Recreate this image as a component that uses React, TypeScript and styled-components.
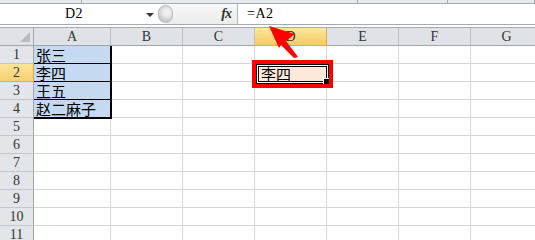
import styled, { createGlobalStyle } from "styled-components";

const GlobalStyle = createGlobalStyle`
  html, body {
    margin: 0;
    padding: 0;
    background: #fff;
  }
  body {
    font-family: "Liberation Serif", "Noto Sans CJK SC", serif;
  }
`;

const COLS = ["A", "B", "C", "D", "E", "F", "G"];
const ROWS = 11;
const names = ["张三", "李四", "王五", "赵二麻子"];

export default function App() {
  return (
    <Window>
      <GlobalStyle />
      <TopStrip>
        <StripPart $w={82} />
        <StripPart $w={276} />
        <StripPart $w={90} />
        <StripPart />
      </TopStrip>
      <FormulaBar>
        <NameBox>
          <NameText>D2</NameText>
          <DropArrow />
        </NameBox>
        <Splitter>
          <Knob />
          <Fx>
            <i>f</i>x
          </Fx>
        </Splitter>
        <FormulaInput>=A2</FormulaInput>
      </FormulaBar>
      <BarGap />
      <Sheet>
        <Corner>
          <CornerMark />
        </Corner>
        {COLS.map((c) => (
          <ColHead key={c} $active={c === "D"}>
            {c}
          </ColHead>
        ))}
        {Array.from({ length: ROWS }, (_, i) => {
          const r = i + 1;
          return [
            <RowHead key={`h${r}`} $active={r === 2}>
              {r}
            </RowHead>,
            ...COLS.map((c) => {
              if (c === "A" && r <= 4) {
                return (
                  <NameCell key={`${c}${r}`} $last={r === 4}>
                    {names[r - 1]}
                  </NameCell>
                );
              }
              if (c === "D" && r === 2) {
                return (
                  <Cell key={`${c}${r}`}>
                    <Highlight>
                      <Selected>
                        李四
                        <FillHandle />
                      </Selected>
                    </Highlight>
                  </Cell>
                );
              }
              return <Cell key={`${c}${r}`} />;
            }),
          ];
        })}
      </Sheet>
      <Arrow viewBox="260 20 45 45" width="45" height="45">
        <polygon
          points="269,26 295,34 286,41 298,57 294,58 281,45 279,48"
          fill="#f00"
        />
      </Arrow>
    </Window>
  );
}

const Window = styled.div`
  position: relative;
  width: 535px;
  height: 240px;
  overflow: hidden;
  background: #fff;
`;

const TopStrip = styled.div`
  display: flex;
  height: 3px;
  background: #e6e9ed;
  border-bottom: 1px solid #a3aab3;
`;

const StripPart = styled.div<{ $w?: number }>`
  flex: ${(p) => (p.$w ? `0 0 ${p.$w}px` : "1")};
  border-right: 1px solid #a3aab3;
  box-sizing: border-box;
`;

const FormulaBar = styled.div`
  display: flex;
  height: 20px;
  border-bottom: 1px solid #a3aab3;
  background: #fff;
`;

const NameBox = styled.div`
  display: flex;
  align-items: center;
  width: 158px;
  box-sizing: border-box;
  padding-right: 4px;
`;

const NameText = styled.span`
  flex: 1;
  text-align: center;
  font-size: 14px;
  color: #000;
  padding-left: 2px;
  letter-spacing: 0.5px;
`;

const DropArrow = styled.span`
  width: 0;
  height: 0;
  border-left: 4px solid transparent;
  border-right: 4px solid transparent;
  border-top: 4px solid #333;
  margin-top: 1px;
`;

const Splitter = styled.div`
  display: flex;
  align-items: center;
  justify-content: space-between;
  width: 80px;
  box-sizing: border-box;
  padding-right: 6px;
  background: linear-gradient(#f8f8f8, #ececec);
  border-right: 1px solid #b0b6bd;
  border-radius: 10px 0 0 10px;
`;

const Knob = styled.span`
  width: 15px;
  height: 18px;
  border-radius: 9px;
  background: radial-gradient(circle at 60% 40%, #f0f0f0 20%, #c4c7cb 75%);
  border: 1px solid #b5b9be;
  box-sizing: border-box;
`;

const Fx = styled.span`
  font-family: "Liberation Serif", serif;
  font-style: italic;
  font-weight: bold;
  font-size: 14px;
  color: #333;
  letter-spacing: -1px;
`;

const FormulaInput = styled.div`
  flex: 1;
  padding-left: 9px;
  font-size: 14px;
  line-height: 20px;
  color: #000;
  letter-spacing: 0.5px;
`;

const BarGap = styled.div`
  height: 2px;
  background: #fff;
  border-bottom: 1px solid #a3aab3;
`;

const Sheet = styled.div`
  display: grid;
  grid-template-columns: 34px 77px repeat(6, 72px);
  grid-auto-rows: 18px;
  width: 543px;
`;

const headBase = `
  box-sizing: border-box;
  display: flex;
  align-items: center;
  justify-content: center;
  font-size: 14px;
  color: #333;
`;

const Corner = styled.div`
  ${headBase}
  position: relative;
  background: #dfe3e8;
  border-right: 1px solid #9ea6af;
  border-bottom: 1px solid #9ea6af;
`;

const CornerMark = styled.span`
  position: absolute;
  right: 3px;
  bottom: 3px;
  width: 0;
  height: 0;
  border-left: 10px solid transparent;
  border-bottom: 10px solid #b5bcc4;
`;

const ColHead = styled.div<{ $active?: boolean }>`
  ${headBase}
  background: ${(p) =>
    p.$active ? "linear-gradient(#fce79f, #f7cb63)" : "#dfe3e8"};
  border-right: 1px solid ${(p) => (p.$active ? "#e9a93c" : "#b8bfc7")};
  border-bottom: 1px solid ${(p) => (p.$active ? "#e9a93c" : "#9ea6af")};
`;

const RowHead = styled.div<{ $active?: boolean }>`
  ${headBase}
  background: ${(p) =>
    p.$active ? "linear-gradient(#fce49a, #f8d170)" : "#e2e6ea"};
  border-right: 1px solid ${(p) => (p.$active ? "#e9a93c" : "#9ea6af")};
  border-bottom: 1px solid ${(p) => (p.$active ? "#e9a93c" : "#c2c7cd")};
`;

const Cell = styled.div`
  position: relative;
  box-sizing: border-box;
  border-right: 1px solid #d6d6d6;
  border-bottom: 1px solid #d6d6d6;
  font-family: "Noto Sans CJK SC", sans-serif;
  font-size: 15px;
  line-height: 17px;
  color: #000;
`;

const NameCell = styled(Cell)<{ $last?: boolean }>`
  background: #c5d9f1;
  padding-left: 2px;
  border-right: 1px solid #000;
  border-bottom: 1px solid #000;
  white-space: nowrap;
  box-shadow: ${(p) =>
    p.$last ? "1px 0 0 #000, 0 1px 0 #000, 1px 1px 0 #000" : "1px 0 0 #000"};
  z-index: 1;
`;

const Highlight = styled.div`
  position: absolute;
  left: -3px;
  top: -4px;
  width: 81px;
  height: 28px;
  box-sizing: border-box;
  border: 4px solid #f00;
  z-index: 2;
`;

const Selected = styled.div`
  position: relative;
  height: 100%;
  box-sizing: border-box;
  background: #fde9d9;
  box-shadow: inset 0 0 0 1px #000, inset 0 0 0 2px #fff, inset 0 0 0 3px #000;
  padding-left: 5px;
  line-height: 20px;
`;

const FillHandle = styled.span`
  position: absolute;
  right: 0;
  bottom: 0;
  width: 5px;
  height: 5px;
  background: #000;
  border-left: 1px solid #fff;
  border-top: 1px solid #fff;
`;

const Arrow = styled.svg`
  position: absolute;
  left: 260px;
  top: 20px;
  z-index: 3;
`;
